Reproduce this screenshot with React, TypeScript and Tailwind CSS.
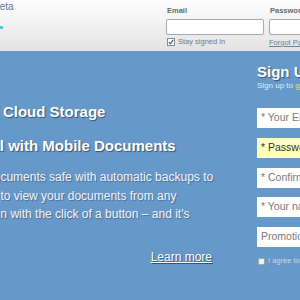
import React from 'react';

const shadow = '[text-shadow:1px_1px_1px_rgba(0,0,0,0.45)]';

function Check() {
    return (
        <span className="w-[8px] h-[8px] border border-[#8a8a8a] bg-white flex items-center justify-center shrink-0">
            <svg width="6" height="6" viewBox="0 0 6 6">
                <path d="M0.8 3.2 L2.3 4.8 L5.2 0.9" fill="none" stroke="#3a5a8a" strokeWidth="1.1" />
            </svg>
        </span>
    );
}

function SignUpField({ text, yellow, dark }: { text: string; yellow?: boolean; dark?: boolean }) {
    return (
        <div
            className={`h-[20px] w-[180px] flex items-center pl-[4px] text-[10.5px] whitespace-nowrap ${yellow ? 'bg-[#ffffbe]' : 'bg-white'} ${dark ? 'text-[#333]' : 'text-[#7a7a7a]'}`}
        >
            {text}
        </div>
    );
}

export default function App() {
    return (
        <div className="w-[300px] h-[300px] overflow-hidden bg-[#6798ca] font-['Liberation_Sans',Arial,sans-serif]">
            {/* Top bar */}
            <header className="h-[51px] flex bg-linear-to-b from-[#fefefe] to-[#e3e3e3]">
                <div className="w-[166px] shrink-0 pt-[2px]">
                    <div className="-ml-[7px] text-[10px] leading-[10px] text-[#5b7a96]">Beta</div>
                    <div className="mt-[14px] w-[3px] h-[3px] bg-[#3fc4e6] rounded-[1px]" />
                </div>
                <div className="w-[98px] shrink-0 pt-[6px]">
                    <div className="text-[7.5px] leading-[10px] font-bold text-[#6a6a6a] pl-[1px]">Email</div>
                    <div className="mt-[3px] h-[16px] border border-[#a9a9a9] rounded-[2px] bg-white" />
                    <div className="mt-[3px] flex items-center gap-[3px] pl-[1px]">
                        <Check />
                        <span className="text-[7.5px] leading-[8px] text-[#777]">Stay signed in</span>
                    </div>
                </div>
                <div className="w-[98px] shrink-0 ml-[5px] pt-[6px]">
                    <div className="text-[7.5px] leading-[10px] font-bold text-[#6a6a6a] pl-[1px]">Password</div>
                    <div className="mt-[3px] h-[16px] border border-[#a9a9a9] rounded-[2px] bg-white" />
                    <div className="mt-[4px] text-[7.5px] leading-[8px] text-[#5f7fa3] underline whitespace-nowrap">Forgot Password?</div>
                </div>
            </header>

            {/* Main */}
            <div className="flex">
                <div className={`w-[283px] shrink-0 -ml-[71px] mr-[45px] pt-[52px] text-white ${shadow}`}>
                    <h2 className="text-[15px] leading-[18px] font-bold whitespace-nowrap">Your Own Cloud Storage</h2>
                    <h2 className="mt-[16px] text-[15px] leading-[18px] font-bold whitespace-nowrap">Get Digital with Mobile Documents</h2>
                    <p className="mt-[13px] text-[12px] leading-[18.5px] text-[#f3f5f9] whitespace-nowrap [text-shadow:1px_1px_1px_rgba(0,0,0,0.3)]">
                        Keep your documents safe with automatic backups to<br />
                        Log in online to view your documents from any<br />
                        device. Sign in with the click of a button – and it's
                    </p>
                    <div className="mt-[24.5px] text-right text-[12px] leading-[18.5px]">
                        <a className="underline">Learn more</a>
                    </div>
                </div>

                <div className="w-[200px] shrink-0 pt-[12px]">
                    <h3 className={`text-[15px] leading-[18px] font-bold text-white whitespace-nowrap ${shadow}`}>Sign Up</h3>
                    <div className="text-[8px] leading-[10px] text-[#e3ebf5] whitespace-nowrap">
                        Sign up to <span className="text-[#d6ec7a]">get started</span>
                    </div>
                    <div className="mt-[17px] flex flex-col gap-[9.75px]">
                        <SignUpField text="* Your Email" />
                        <SignUpField text="* Password" yellow dark />
                        <SignUpField text="* Confirm Password" />
                        <SignUpField text="* Your name" />
                        <SignUpField text="Promotion code" />
                    </div>
                    <div className="mt-[10px] flex items-center gap-[3px] pl-[1px]">
                        <span className="w-[7px] h-[7px] border border-[#9aa] bg-[#eef1f4] shrink-0" />
                        <span className="text-[7.5px] leading-[8px] text-[#c9d6e6] whitespace-nowrap">I agree to the terms</span>
                    </div>
                </div>
            </div>
        </div>
    );
}
